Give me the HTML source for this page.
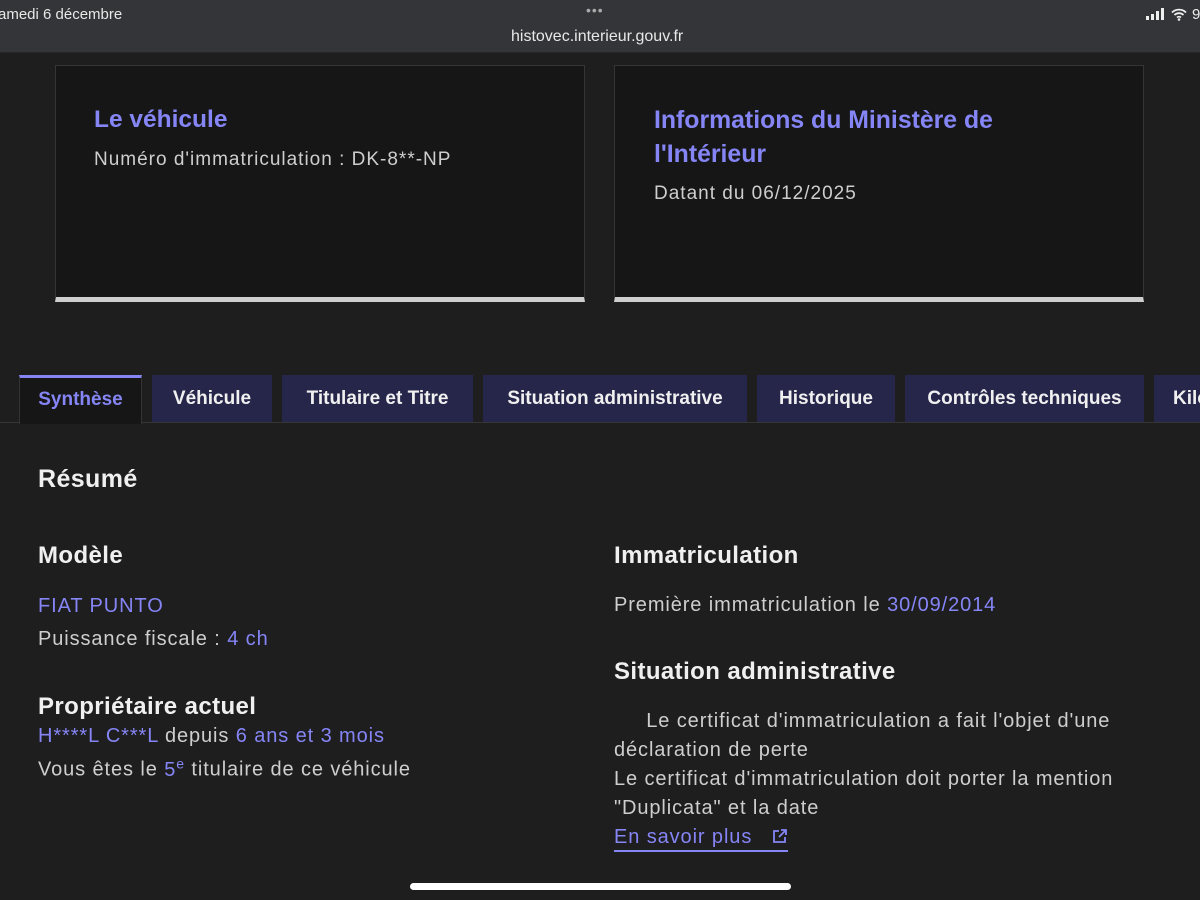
<!DOCTYPE html>
<html><head><meta charset="utf-8"><style>
*{margin:0;padding:0;box-sizing:border-box}
body{width:1200px;height:900px;overflow:hidden;background:#1e1e1f;font-family:"Liberation Sans",sans-serif;color:#cecece;position:relative}
.top{position:absolute;left:0;top:0;width:1200px;height:53px;background:#333538;border-bottom:1px solid #262626}
.abs{position:absolute;white-space:nowrap}
.card{position:absolute;top:65px;width:530px;height:237px;background:#161616;border:1px solid #353535;border-bottom:5px solid #cecece}
.tab{position:absolute;top:0;height:47px;background:#26264a;color:#f0f0f0;font-weight:bold;font-size:19px;line-height:47px;text-align:center;white-space:nowrap}
.panel{position:absolute;left:0;top:422px;width:1200px;height:478px;background:#1e1e1e;border-top:1px solid #353535}
h3{font-size:24px;letter-spacing:0.4px;color:#f0f0f0;font-weight:bold;position:absolute;white-space:nowrap}
.t{font-size:20px;letter-spacing:0.9px;position:absolute;white-space:nowrap;color:#cecece}
.blue,.t .blue,.t.blue{color:#8585f6}
</style></head><body>
<div class="top"></div>
<div class="abs" style="left:-2px;top:6px;font-size:15px;color:#e8e8e8">amedi 6 décembre</div>
<div class="abs" style="left:586px;top:2px;font-size:14px;color:#aaa;letter-spacing:1px">•••</div>
<div class="abs" style="left:511px;top:28px;font-size:16px;color:#e8e8e8">histovec.interieur.gouv.fr</div>
<div class="abs" style="left:1146px;top:8px;width:20px;height:12px">
<div style="position:absolute;left:0;bottom:0;width:3px;height:4px;background:#eee"></div>
<div style="position:absolute;left:5px;bottom:0;width:3px;height:6px;background:#eee"></div>
<div style="position:absolute;left:10px;bottom:0;width:3px;height:9px;background:#eee"></div>
<div style="position:absolute;left:15px;bottom:0;width:3px;height:12px;background:#eee"></div></div>
<svg class="abs" style="left:1171px;top:8px" width="16" height="13" viewBox="0 0 16 13"><path d="M1 4.5a10 10 0 0 1 14 0M3.5 7a6.5 6.5 0 0 1 9 0M6 9.5a3 3 0 0 1 4 0" fill="none" stroke="#eee" stroke-width="1.8"/><circle cx="8" cy="11.5" r="1.3" fill="#eee"/></svg>
<div class="abs" style="left:1192px;top:6px;font-size:15px;color:#eee">9</div>

<div class="card" style="left:55px"></div>
<div class="card" style="left:614px"></div>
<div class="abs blue" style="left:94px;top:106px;font-size:24.5px;font-weight:bold">Le véhicule</div>
<div class="abs" style="left:94px;top:149px;font-size:19px;letter-spacing:1px">Numéro d'immatriculation : DK-8**-NP</div>
<div class="abs blue" style="left:654px;top:104px;font-size:24.8px;font-weight:bold;line-height:34px">Informations du Ministère de<br>l'Intérieur</div>
<div class="abs" style="left:654px;top:183px;font-size:19px;letter-spacing:1px">Datant du 06/12/2025</div>

<div class="panel"></div>
<div style="position:absolute;left:0;top:375px;width:1200px;height:50px;overflow:hidden">
<div class="tab" style="left:19px;width:123px;background:#161616;color:#8585f6;border-top:3px solid #8585f6;height:49px;line-height:44px;border-left:1px solid #333;border-right:1px solid #333">Synthèse</div>
<div class="tab" style="left:152px;width:120px">Véhicule</div>
<div class="tab" style="left:282px;width:191px">Titulaire et Titre</div>
<div class="tab" style="left:483px;width:264px">Situation administrative</div>
<div class="tab" style="left:757px;width:138px">Historique</div>
<div class="tab" style="left:905px;width:239px">Contrôles techniques</div>
<div class="tab" style="left:1154px;width:80px;text-align:left;padding-left:19px">Kilométrage</div>
</div>

<h3 style="left:38px;top:465px;font-size:25px">Résumé</h3>
<h3 style="left:38px;top:542px">Modèle</h3>
<div class="t blue" style="left:38px;top:595px">FIAT PUNTO</div>
<div class="t" style="left:38px;top:628px">Puissance fiscale : <span class="blue">4 ch</span></div>
<h3 style="left:38px;top:693px">Propriétaire actuel</h3>
<div class="t" style="left:38px;top:725px"><span class="blue">H****L C***L</span> depuis <span class="blue">6 ans et 3 mois</span></div>
<div class="t" style="left:38px;top:755px">Vous êtes le <span class="blue">5<sup style="font-size:14px">e</sup></span> titulaire de ce véhicule</div>

<h3 style="left:614px;top:542px">Immatriculation</h3>
<div class="t" style="left:614px;top:594px">Première immatriculation le <span class="blue">30/09/2014</span></div>
<h3 style="left:614px;top:658px">Situation administrative</h3>
<div class="t" style="left:614px;top:707px;line-height:29px">&nbsp;&nbsp;&nbsp;&nbsp;&nbsp;Le certificat d'immatriculation a fait l'objet d'une<br>déclaration de perte<br>Le certificat d'immatriculation doit porter la mention<br>"Duplicata" et la date</div>
<div class="t blue" style="left:614px;top:826px;border-bottom:2px solid #8585f6;padding-bottom:1px">En savoir plus &nbsp;
<svg width="16" height="16" viewBox="0 0 16 16" style="vertical-align:-1px"><path d="M7 3H2v11h11V9M9 2h5v5M14 2L7 9" fill="none" stroke="#8585f6" stroke-width="1.8"/></svg></div>
<div class="abs" style="left:410px;top:883px;width:381px;height:7px;border-radius:4px;background:#fff"></div>
</body></html>
